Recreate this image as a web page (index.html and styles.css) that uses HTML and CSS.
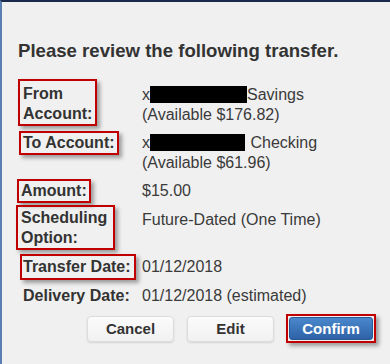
FILE: index.html
```html
<!DOCTYPE html>
<html>
<head>
<meta charset="utf-8">
<link rel="stylesheet" href="styles.css">
</head>
<body>
<div class="frame">
  <h1 class="title">Please review the following transfer.</h1>
  <div class="details">
    <div class="label"><span class="mark mark-from">From<br>Account:</span></div>
    <div class="value">x<span class="redact redact-1"></span>Savings<br>(Available $176.82)</div>

    <div class="label"><span class="mark mark-to">To Account:</span></div>
    <div class="value">x<span class="redact redact-2"></span> Checking<br>(Available $61.96)</div>

    <div class="label"><span class="mark mark-amount">Amount:</span></div>
    <div class="value">$15.00</div>

    <div class="label"><span class="mark mark-sched">Scheduling<br>Option:</span></div>
    <div class="value">Future-Dated (One Time)</div>

    <div class="label"><span class="mark mark-transfer">Transfer Date:</span></div>
    <div class="value">01/12/2018</div>

    <div class="label">Delivery Date:</div>
    <div class="value">01/12/2018 (estimated)</div>
  </div>
  <div class="actions">
    <button class="btn">Cancel</button>
    <button class="btn">Edit</button>
    <span class="confirm-mark"><button class="btn btn-primary">Confirm</button></span>
  </div>
</div>
</body>
</html>
```

FILE: styles.css
```css
html, body {
  margin: 0;
  padding: 0;
  background: #f0f0f0;
}
body {
  font-family: "Liberation Sans", Arial, sans-serif;
  color: #333;
}
.frame {
  width: 390px;
  height: 364px;
  box-sizing: border-box;
  border-top: 2px solid #1b2a4c;
  border-left: 2px solid #5b7fb3;
  padding: 0 14px 0 16px;
  display: flex;
  flex-direction: column;
}
.title {
  margin: 38px 0 0 0;
  font-size: 18.6px;
  line-height: 22px;
  font-weight: bold;
  color: #333;
}
.details {
  margin-top: 23px;
  display: grid;
  grid-template-columns: 124px 1fr;
  row-gap: 8px;
  font-size: 16px;
  line-height: 20px;
}
.label {
  font-weight: bold;
  padding-left: 5px;
  color: #333;
}
.value {
  color: #3a3a3a;
}
.mark {
  display: inline-block;
  border: 2px solid #c00000;
  box-shadow: 3px 3px 4px rgba(0, 0, 0, 0.35);
}
.mark-from { padding: 3px 3px 0 3px; margin: -6px -5px -2px -5px; }
.mark-to { padding: 0 2px; margin: -4px -4px -2px -4px; }
.mark-amount { padding: 0 2px; margin: -5px -4px -1px -6px; }
.mark-sched { padding: 1px 6px 0 3px; margin: -5px -8px -1px -7px; }
.mark-transfer { padding: 1px 3px 1px 1px; margin: -4px -5px -2px -3px; }
.redact {
  display: inline-block;
  background: #000;
  height: 17px;
  vertical-align: -3px;
}
.redact-1 { width: 97px; }
.redact-2 { width: 95px; margin-right: 1px; }
.actions {
  margin-top: 8px;
  display: flex;
  justify-content: flex-end;
  align-items: center;
  gap: 13px;
}
.btn {
  font-family: "Liberation Sans", Arial, sans-serif;
  font-size: 15px;
  font-weight: bold;
  color: #333;
  width: 87px;
  height: 26px;
  border: 1px solid #dcdcdc;
  border-radius: 4px;
  background: linear-gradient(#fbfbfb, #f1f1f1);
  box-shadow: 0 1px 2px rgba(0, 0, 0, 0.12);
  padding: 0;
}
.confirm-mark {
  display: inline-block;
  border: 2px solid #c00000;
  padding: 1px;
  margin-left: -1px;
  box-shadow: 3px 3px 4px rgba(0, 0, 0, 0.35);
  line-height: 0;
}
.btn-primary {
  width: 84px;
  height: 23px;
  color: #fff;
  border: 1px solid #2a5a96;
  border-radius: 3px;
  background: linear-gradient(#4a87cc, #2e62a6);
  box-shadow: none;
}
```
